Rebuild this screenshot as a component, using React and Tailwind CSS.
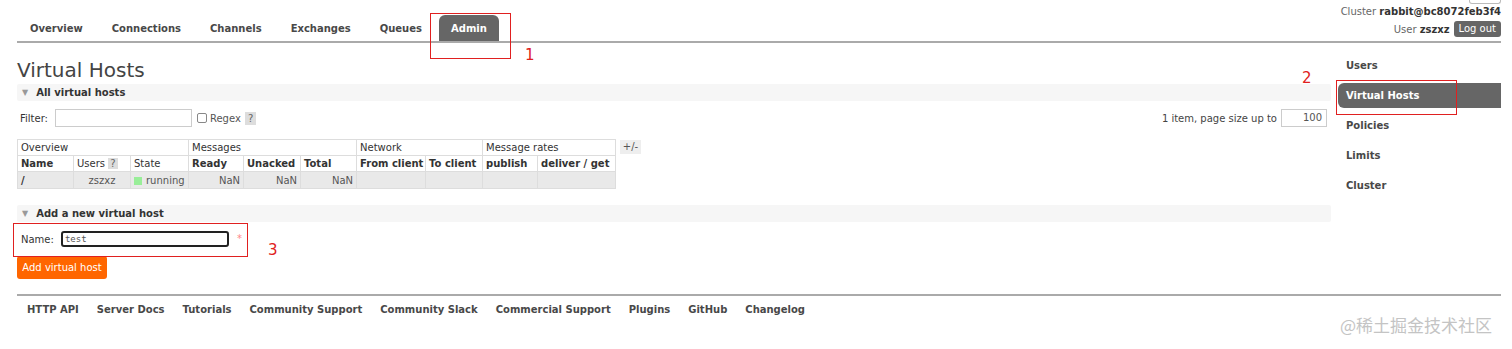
import React from "react";

const tabs = ["Overview", "Connections", "Channels", "Exchanges", "Queues", "Admin"];
const sideItems = ["Users", "Virtual Hosts", "Policies", "Limits", "Cluster"];
const footerLinks = [
  "HTTP API",
  "Server Docs",
  "Tutorials",
  "Community Support",
  "Community Slack",
  "Commercial Support",
  "Plugins",
  "GitHub",
  "Changelog",
];

function SectionBar({ title }) {
  return (
    <div className="h-[17px] bg-[#f6f6f6] rounded-[2px] flex items-center pl-[5px] text-[10px] font-bold text-[#333]">
      <span className="text-[8px] text-[#999] mr-[8px] leading-none">▼</span>
      {title}
    </div>
  );
}

const cell = "border border-[#ddd] px-[3px] whitespace-nowrap overflow-hidden";

export default function App() {
  return (
    <div className="relative w-[1512px] h-[349px] bg-white overflow-hidden font-['DejaVu_Sans','Liberation_Sans',sans-serif] text-[10px] text-[#333] pl-[17px] pr-[11px]">
      {/* Header */}
      <div className="flex justify-between h-[43px] border-b-2 border-[#aaa]">
        <div className="flex items-end gap-[5px] pl-px">
          {tabs.map((t) => (
            <div
              key={t}
              className={`px-[12px] h-[26px] leading-[27px] font-bold text-[10px] ${
                t === "Admin" ? "bg-[#666] text-white rounded-t-[6px]" : "text-[#484848]"
              }`}
            >
              {t}
            </div>
          ))}
        </div>
        <div className="flex flex-col items-end">
          <div className="w-[32px] h-[4px] border border-t-0 border-[#bbb] rounded-b-[3px]" />
          <div className="mt-px h-[14px] leading-[14px] text-[#666]">
            Cluster <span className="font-bold text-[#333]">rabbit@bc8072feb3f4</span>
          </div>
          <div className="mt-[2px] flex items-center gap-[4px] text-[#666]">
            <span>
              User <span className="font-bold text-[#333]">zszxz</span>
            </span>
            <span className="bg-[#666] text-white rounded-[3px] h-[16px] leading-[16px] px-[5px]">Log out</span>
          </div>
        </div>
      </div>

      {/* Main */}
      <div className="flex">
        <div className="w-[1314px]">
          <h1 className="mt-[15px] text-[20px] leading-[24px] font-normal text-[#444]">Virtual Hosts</h1>
          <div className="mt-[2px]">
            <SectionBar title="All virtual hosts" />
          </div>

          <div className="mt-[8px] h-[18px] flex items-center justify-between pr-[4px]">
            <div className="flex items-center pl-[3px]">
              <span>Filter:</span>
              <div className="ml-[7px] w-[137px] h-[18px] border border-[#ccc] bg-white" />
              <div className="ml-[5px] w-[10px] h-[10px] border border-[#888] rounded-[2px]" />
              <span className="ml-[3px] text-[#555]">Regex</span>
              <span className="ml-[4px] bg-[#ddd] text-[#666] px-[3px] h-[13px] leading-[13px]">?</span>
            </div>
            <div className="flex items-center">
              <span className="text-[#444]">1 item, page size up to</span>
              <div className="ml-[4px] w-[46px] h-[18px] border border-[#ccc] text-right pr-[4px] leading-[16px] text-[#555]">
                100
              </div>
            </div>
          </div>

          <div className="mt-[12px] flex items-start">
            <table className="border-collapse w-[598px] text-[10px] table-fixed">
              <colgroup>
                <col className="w-[56px]" />
                <col className="w-[57px]" />
                <col className="w-[58px]" />
                <col className="w-[55px]" />
                <col className="w-[57px]" />
                <col className="w-[56px]" />
                <col className="w-[69px]" />
                <col className="w-[57px]" />
                <col className="w-[55px]" />
                <col className="w-[78px]" />
              </colgroup>
              <tbody>
                <tr className="h-[16px] leading-[14px]">
                  <td colSpan={3} className={cell}>Overview</td>
                  <td colSpan={3} className={cell}>Messages</td>
                  <td colSpan={2} className={cell}>Network</td>
                  <td colSpan={2} className={cell}>Message rates</td>
                </tr>
                <tr className="h-[16px] leading-[14px] font-bold">
                  <td className={cell}>Name</td>
                  <td className={`${cell} font-normal`}>
                    Users <span className="bg-[#ddd] text-[#666] px-[2px]">?</span>
                  </td>
                  <td className={`${cell} font-normal`}>State</td>
                  <td className={cell}>Ready</td>
                  <td className={cell}>Unacked</td>
                  <td className={cell}>Total</td>
                  <td className={`${cell} px-[2px]`}>From client</td>
                  <td className={`${cell} px-[2px]`}>To client</td>
                  <td className={cell}>publish</td>
                  <td className={cell}>deliver / get</td>
                </tr>
                <tr className="h-[17px] leading-[15px] bg-[#e9e9e9] text-[#555]">
                  <td className={`${cell} font-bold text-[#333]`}>/</td>
                  <td className={`${cell} text-center`}>zszxz</td>
                  <td className={cell}>
                    <span className="inline-block w-[8px] h-[8px] bg-[#99ee99] mr-[4px] align-[-1px]" />
                    running
                  </td>
                  <td className={`${cell} text-right`}>NaN</td>
                  <td className={`${cell} text-right`}>NaN</td>
                  <td className={`${cell} text-right`}>NaN</td>
                  <td className={cell}></td>
                  <td className={cell}></td>
                  <td className={cell}></td>
                  <td className={cell}></td>
                </tr>
              </tbody>
            </table>
            <div className="ml-[4px] mt-px w-[21px] h-[14px] leading-[14px] bg-[#eee] text-[#555] text-center">+/-</div>
          </div>

          <div className="mt-[16px]">
            <SectionBar title="Add a new virtual host" />
          </div>

          <div className="mt-[9px] flex items-center h-[16px] pl-[4px]">
            <span>Name:</span>
            <div className="ml-[7px] w-[168px] h-[16px] border-2 border-[#222] rounded-[3px] pl-[2px] leading-[12px] font-['DejaVu_Sans_Mono',monospace] text-[9px] text-[#555]">
              test
            </div>
            <span className="ml-[8px] text-[#f88] self-start">*</span>
          </div>

          <div className="mt-[9px] w-[90px] h-[23px] leading-[23px] bg-[#ff6600] text-white rounded-[3px] text-center">
            Add virtual host
          </div>
        </div>

        <div className="ml-[7px] w-[163px] mt-[10px] flex flex-col gap-[5px]">
          {sideItems.map((s) => (
            <div
              key={s}
              className={`h-[25px] leading-[25px] pl-[8px] font-bold ${
                s === "Virtual Hosts" ? "bg-[#666] text-white rounded-l-[6px]" : "text-[#484848]"
              }`}
            >
              {s}
            </div>
          ))}
        </div>
      </div>

      {/* Footer */}
      <div className="mt-[15px] border-t-2 border-[#aaa] flex gap-[18px] pl-[10px] pt-[7px] font-bold text-[#484848] h-[22px] items-center">
        {footerLinks.map((l) => (
          <span key={l}>{l}</span>
        ))}
      </div>

      {/* Annotations */}
      <div className="absolute left-[430px] top-[13px] w-[81px] h-[46px] border-[1.5px] border-[#e02020]" />
      <div className="absolute left-[525px] top-[48px] text-[15px] text-[#e02020] leading-none">1</div>
      <div className="absolute left-[1336px] top-[80px] w-[121px] h-[35px] border-[1.5px] border-[#e02020]" />
      <div className="absolute left-[1302px] top-[71px] text-[15px] text-[#e02020] leading-none">2</div>
      <div className="absolute left-[13px] top-[223px] w-[235px] h-[34px] border-[1.5px] border-[#e02020]" />
      <div className="absolute left-[268px] top-[243px] text-[15px] text-[#e02020] leading-none">3</div>

      <div className="absolute left-[1340px] top-[315px] text-[17px] leading-[20px] text-[#c4c4c4] font-['Noto_Sans_CJK_SC',sans-serif]">
        @稀土掘金技术社区
      </div>
    </div>
  );
}
